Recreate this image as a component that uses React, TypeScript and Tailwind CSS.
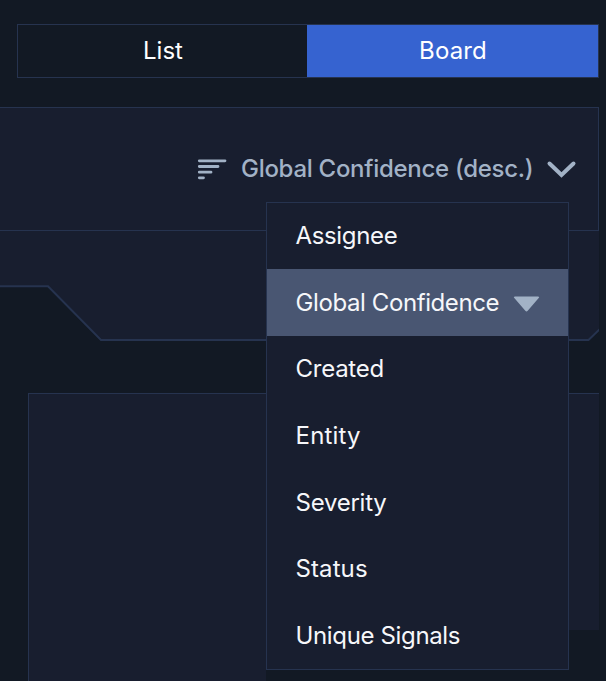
const options = [
  { label: "Assignee", tracking: "tracking-[-0.35px]" },
  { label: "Global Confidence", tracking: "tracking-[-0.4px]", active: true },
  { label: "Created", tracking: "tracking-[-0.25px]" },
  { label: "Entity", tracking: "tracking-[0.2px]" },
  { label: "Severity", tracking: "tracking-[-0.25px]" },
  { label: "Status", tracking: "tracking-[0.1px]" },
  { label: "Unique Signals", tracking: "tracking-[-0.35px]" },
];

function SortIcon() {
  return (
    <svg className="h-[22px] w-[30px] shrink-0" viewBox="0 0 30 22" fill="none" stroke="#a2b2c6" strokeWidth="2.8" strokeLinecap="round">
      <path d="M2.3 2.8H28M2.3 8.5H21M2.3 14.2H14M2.3 19.8H6.5" />
    </svg>
  );
}

function SortMenu() {
  return (
    <ul className="absolute left-[69px] top-[45px] z-10 flex h-[468px] w-[303px] flex-col border border-[#26334f] bg-[#181e2f] text-[24px] leading-none text-[#f6f7fa]">
      {options.map((o) => (
        <li key={o.label} className={`flex flex-1 items-center pl-[28.5px] ${o.active ? "-mt-px bg-[#495672] pt-px" : ""}`}>
          <span className={`whitespace-nowrap ${o.tracking}`}>{o.label}</span>
          {o.active && (
            <svg className="ml-auto mr-[28px] mt-[3px] h-[16px] w-[27px]" viewBox="0 0 27 16" fill="#a2b2c6">
              <path d="M2 .5H25Q27 .5 25.7 2L14.7 14.8Q13.5 16 12.3 14.8L1.3 2Q0 .5 2 .5Z" />
            </svg>
          )}
        </li>
      ))}
    </ul>
  );
}

export default function App() {
  return (
    <div className="h-[681px] w-[606px] overflow-hidden bg-[#121924] pt-[24px] font-['Inter','Liberation_Sans',sans-serif]">
      <div className="ml-[17px] flex h-[54px] w-[582px] border border-[#26334f] text-[24px] leading-none text-white">
        <button className="w-[289px] pb-px pl-px">List</button>
        <button className="flex-1 bg-[#3663d0] pb-px pl-px tracking-[0.15px]">Board</button>
      </div>

      <header className="mt-[29px] flex h-[124px] w-[599px] items-center justify-end border-y border-r border-[#26334f] bg-[#181e2f] pr-[21px]">
        <div className="relative flex h-[24px] w-[380px] items-center">
          <SortIcon />
          <span className="ml-[14px] whitespace-nowrap text-[24px] font-medium leading-none tracking-[-0.29px] text-[#a2b2c6]">Global Confidence (desc.)</span>
          <svg className="ml-auto h-[19px] w-[32px] shrink-0" viewBox="0 0 32 19" fill="none" stroke="#a2b2c6" strokeWidth="4" strokeLinecap="round">
            <path d="M4.5 3.5L16.5 15L28.5 3.5" />
          </svg>
          <SortMenu />
        </div>
      </header>

      <svg className="block h-[112px] w-[599px]" viewBox="0 0 599 112" fill="none">
        <path d="M0 0H599V99L588.5 109H101L48 55.5H0Z" fill="#181e2f" />
        <path d="M0 55.3H48L101 109H588.5L600 98" stroke="#26334f" strokeWidth="2" />
      </svg>

      <main className="mt-[50px] ml-[28px] flex h-[288px] w-[571px] items-start">
        <section className="h-full w-[238px] border-l border-t border-[#26334f] bg-[#181e2f]" />
        <section className="h-[237px] flex-1 border-t border-[#26334f] bg-[#181e2f]" />
      </main>
    </div>
  );
}
